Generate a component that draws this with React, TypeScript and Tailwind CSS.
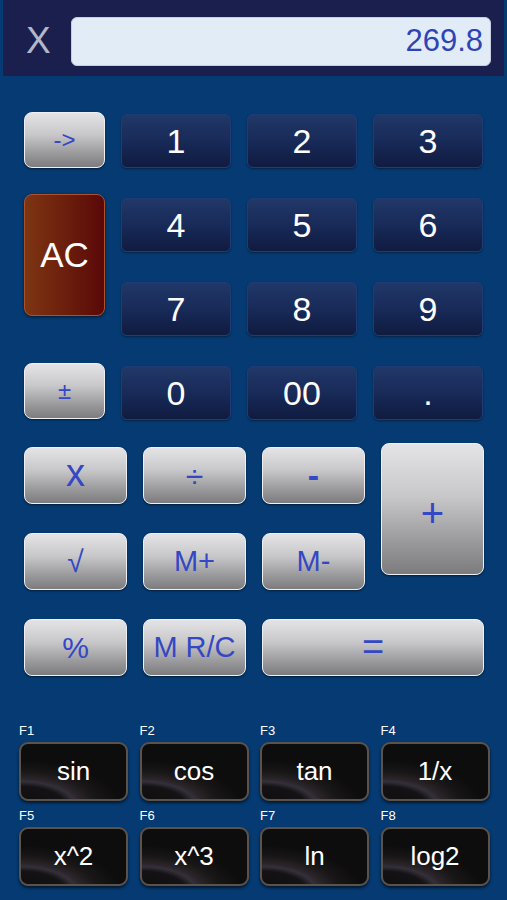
import React from "react";

const grayBtn =
  "flex items-center justify-center rounded-[8px] border-[1.5px] border-[#eef0f4] bg-[linear-gradient(180deg,#e4e4e6_0%,#c8c8ca_40%,#9a9a9c_75%,#7c7c7e_100%)] text-[#3447c4] shadow-[0_1px_2px_rgba(0,0,0,0.5)]";

const digitBtn =
  "flex items-center justify-center rounded-[6px] border border-[#213c74] bg-[linear-gradient(180deg,#213868_0%,#182a58_50%,#101b40_100%)] text-white text-[34px] shadow-[0_1px_2px_rgba(0,0,0,0.4)]";

const funcBtn =
  "flex h-[59px] items-center justify-center rounded-[9px] border-2 border-[#5b524b] bg-[radial-gradient(ellipse_95%_85%_at_0%_115%,#0e0c0c_0%,#141214_45%,#34303a_55%,#2a2428_62%,#181616_78%,#0e0d0d_100%)] text-[26px] text-white shadow-[0_2px_3px_rgba(0,0,0,0.6)]";

const funcs = [
  ["F1", "sin"],
  ["F2", "cos"],
  ["F3", "tan"],
  ["F4", "1/x"],
  ["F5", "x^2"],
  ["F6", "x^3"],
  ["F7", "ln"],
  ["F8", "log2"],
];

export default function App() {
  return (
    <div className="h-[900px] w-[507px] overflow-hidden bg-[#053a72] font-['Liberation_Sans',Arial,sans-serif]">
      {/* Header with display */}
      <div className="mx-[3px] flex h-[76px] items-start bg-[#1b1f4e] pl-[23px] pt-[17px]">
        <div className="w-[45px] pt-[4px] text-[37px] leading-[40px] text-[#b3b7c9]">X</div>
        <div className="flex h-[49px] w-[420px] items-center justify-end rounded-[6px] border border-[#c5cfe0] bg-[#e1ecf7] pr-[7px] text-[31px] text-[#2f44b4]">
          269.8
        </div>
      </div>

      {/* Digit pad */}
      <div className="mt-[38px] grid grid-cols-[81px_110px_110px_110px] grid-rows-[54px_54px_54px_54px] gap-x-4 gap-y-[30px] pl-[24px]">
        <div className={`${grayBtn} col-start-1 row-start-1 -mt-[2px] h-[56px] text-[24px]`}>-&gt;</div>
        <div className={`${digitBtn} col-start-2 row-start-1`}>1</div>
        <div className={`${digitBtn} col-start-3 row-start-1`}>2</div>
        <div className={`${digitBtn} col-start-4 row-start-1`}>3</div>

        <div className="col-start-1 row-span-2 row-start-2 -mt-[4px] flex h-[122px] items-center justify-center rounded-[8px] border border-[#a9522c] bg-[linear-gradient(90deg,#7e3512_0%,#6a1d0c_55%,#5a0808_100%)] text-[35px] text-white shadow-[0_1px_3px_rgba(0,0,0,0.6)]">
          AC
        </div>
        <div className={`${digitBtn} col-start-2 row-start-2`}>4</div>
        <div className={`${digitBtn} col-start-3 row-start-2`}>5</div>
        <div className={`${digitBtn} col-start-4 row-start-2`}>6</div>
        <div className={`${digitBtn} col-start-2 row-start-3`}>7</div>
        <div className={`${digitBtn} col-start-3 row-start-3`}>8</div>
        <div className={`${digitBtn} col-start-4 row-start-3`}>9</div>

        <div className={`${grayBtn} col-start-1 row-start-4 -mt-[3px] h-[56px] text-[24px]`}>±</div>
        <div className={`${digitBtn} col-start-2 row-start-4`}>0</div>
        <div className={`${digitBtn} col-start-3 row-start-4`}>00</div>
        <div className={`${digitBtn} col-start-4 row-start-4`}>.</div>
      </div>

      {/* Operators */}
      <div className="mt-[27px] grid grid-cols-[103px_103px_103px_103px] grid-rows-[57px_57px_57px] gap-x-4 gap-y-[29px] pl-[24px]">
        <div className={`${grayBtn} col-start-1 row-start-1 pb-[4px] text-[38px]`}>x</div>
        <div className={`${grayBtn} col-start-2 row-start-1 text-[32px]`}>÷</div>
        <div className={`${grayBtn} col-start-3 row-start-1 text-[34px] font-bold`}>-</div>
        <div className={`${grayBtn} col-start-4 row-span-2 row-start-1 -mt-[4px] h-[132px] pt-[8px] text-[40px]`}>+</div>

        <div className={`${grayBtn} col-start-1 row-start-2 text-[30px]`}>√</div>
        <div className={`${grayBtn} col-start-2 row-start-2 text-[29px]`}>M+</div>
        <div className={`${grayBtn} col-start-3 row-start-2 text-[29px]`}>M-</div>

        <div className={`${grayBtn} col-start-1 row-start-3 text-[30px]`}>%</div>
        <div className={`${grayBtn} col-start-2 row-start-3 whitespace-nowrap text-[29px]`}>M R/C</div>
        <div className={`${grayBtn} col-span-2 col-start-3 row-start-3 text-[38px]`}>=</div>
      </div>

      {/* Function keys */}
      <div className="mt-[48px] grid grid-cols-[109px_109px_109px_109px] gap-x-[11.5px] gap-y-[8px] pl-[19px]">
        {funcs.map(([label, text]) => (
          <div key={label} className="flex flex-col">
            <div className="h-[18px] text-[13px] leading-[14px] text-white">{label}</div>
            <div className={funcBtn}>{text}</div>
          </div>
        ))}
      </div>
    </div>
  );
}
